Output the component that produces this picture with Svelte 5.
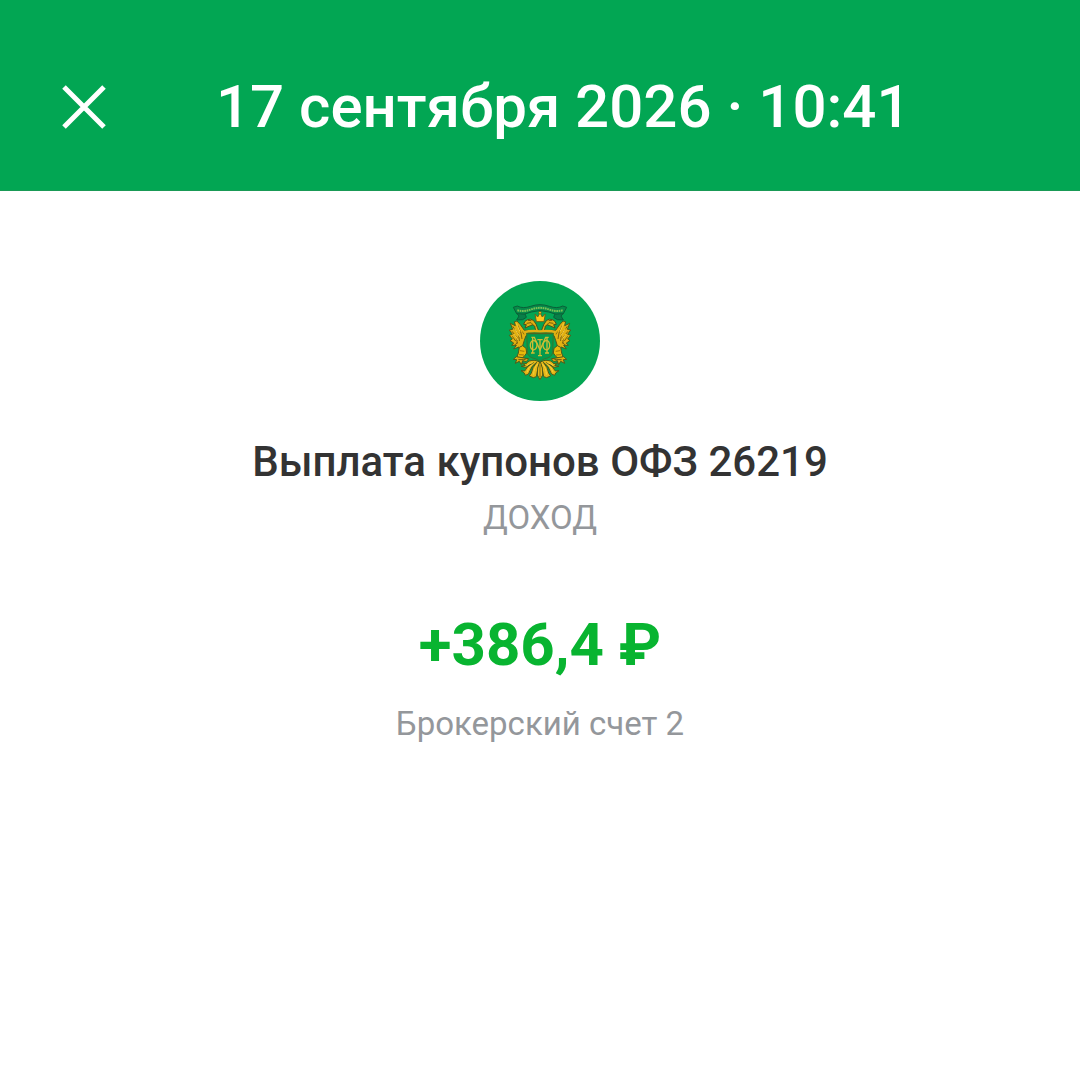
<script>
  const operation = {
    date: '17 сентября 2026 · 10:41',
    title: 'Выплата купонов ОФЗ 26219',
    category: 'ДОХОД',
    amount: '+386,4 ₽',
    account: 'Брокерский счет 2'
  };
</script>

<header class="bar">
  <button class="close" type="button" aria-label="Закрыть">
    <svg viewBox="0 0 48 48" aria-hidden="true">
      <path d="M4 4 44 44M44 4 4 44" />
    </svg>
  </button>
  <h1>{operation.date}</h1>
</header>

<main class="details">
  <svg class="logo" viewBox="30 33 360 360" role="img" aria-label="Минфин России">
    <circle cx="210" cy="213" r="180" fill="#04a553" />

    <!-- ribbon -->
    <g stroke="#0a5f38" stroke-width="3" stroke-linejoin="round">
      <path d="M140 130 147 138 140 150 158 149 169 142 165 131ZM280 130 273 138 280 150 262 149 251 142 255 131Z" fill="#087f48" />
      <path d="M130 112 142 108Q158 117 182 109Q210 99 238 109Q262 117 278 108L290 112 280 131Q257 136 236 126Q210 117 184 126Q163 136 140 131Z" fill="#078a49" />
    </g>
    <path d="M142 121Q164 126 184 118Q210 109 236 118Q256 126 278 121" fill="none" stroke="#7cc255" stroke-width="6" stroke-dasharray="5 2" />

    <!-- wings, mirrored about the centre line -->
    {#each [false, true] as mirrored}
      <g class:mirrored>
        <path d="M192 181 163 181 151 164 141 153 133 155 136 167 121 160 128 178 118 180 127 193 118 196 127 207 120 212 131 219 125 226 139 226 131 237 147 231 148 240 158 227 163 211 168 197 192 194Z" fill="#e3b111" stroke="#4d5a1b" stroke-width="3" />
        <path d="M143 166 153 189 156 207M128 169 146 193 148 213M126 184 141 203 141 221M127 199 137 213M133 226 144 217M158 185 162 193" fill="none" stroke="#795f10" stroke-width="3" />
        <path d="M139 160 150 185M134 176 149 200M132 192 145 211" fill="none" stroke="#f8cf42" stroke-width="3" />
        <path d="M198 186 194 169Q188 161 181 167L165 174 169 164 161 163Q163 153 172 149Q182 145 190 151L198 162 205 180Z" fill="#e1b013" stroke="#49511c" stroke-width="3" />
        <path d="M170 160 183 158 195 170M173 151 184 152" fill="none" stroke="#75600c" stroke-width="3" />
        <path d="M148 232 158 227 168 235 170 249 162 260 150 267 141 260 145 249Z" fill="#e9b90b" stroke="#4d5a1c" stroke-width="3" />
        <path d="M150 242 163 244M147 254 162 255" fill="none" stroke="#997508" stroke-width="3" />
        <path d="M139 260 130 268 140 269 136 280 148 274 154 284 158 272 169 275 176 266 162 264Z" fill="#e1af10" stroke="#4d5a1b" stroke-width="3" />
        <path d="M145 269 161 269 170 266" fill="none" stroke="#655611" stroke-width="3" />
        <path d="M195 271Q175 270 169 281L157 279 166 286 153 289 168 292Q181 283 190 278Q170 288 164 303L153 302 163 309 166 316Q178 315 180 302Q184 288 200 277Q186 293 184 309L178 318 190 323 199 320 204 294 210 276Z" fill="#e6b717" stroke="#4d5a1a" stroke-width="3" />
        <path d="M171 286Q179 279 189 278M171 307Q174 293 187 283M191 314Q191 293 204 281" fill="none" stroke="#f8cf3c" stroke-width="3" />
      </g>
    {/each}

    <!-- centre feathers and crown -->
    <path d="M210 272Q200 295 202 315L210 329 218 315Q220 295 210 272Z" fill="#e8ba1a" stroke="#515a18" stroke-width="3" />
    <path d="M210 284V322" stroke="#836b0d" stroke-width="3" />
    <path d="M195 132 203 141 208 132 206 127 210 123 214 127 212 132 217 141 226 132 222 155H199Z" fill="#ffc61d" stroke="#6b6518" stroke-width="3" />

    <!-- shield with monogram -->
    <path d="M170 187H250L248 249Q244 263 224 266L210 274 196 266Q176 263 172 249Z" fill="#049a4d" stroke="#39742b" stroke-width="3" />
    <path d="M160 187Q183 181 210 184Q239 181 260 187" fill="none" stroke="#e1af14" stroke-width="7" />
    <path d="M172 191H248" stroke="#5e5e1a" stroke-width="3" />
    <g fill="none" stroke="#d0bd32" stroke-width="4">
      <path d="M188 202V249M231 202V249M184 202H193L210 240 227 202H236M183 249H194M225 249H237" />
      <path d="M190 211Q181 214 181 226Q181 239 191 240Q201 236 201 224Q200 213 190 211M230 211Q239 214 239 226Q239 239 229 240Q219 236 219 224Q220 213 230 211" />
      <path d="M210 207V257M202 209H218M204 257H216" />
    </g>
  </svg>

  <h2>{operation.title}</h2>
  <p class="note">{operation.category}</p>
  <p class="amount">{operation.amount}</p>
  <p class="note">{operation.account}</p>
</main>

<style>
  :global(body) {
    margin: 0;
    background: #fff;
    font-family: Roboto, "Noto Sans", sans-serif;
  }

  h1,
  h2,
  p {
    margin: 0;
  }

  .bar {
    display: flex;
    align-items: center;
    gap: 108px;
    padding: 72px 60px 48px;
    background: #02a653;
    border-bottom: 1px solid #199a56;
    color: #fff;
  }

  .close {
    flex: none;
    width: 48px;
    height: 48px;
    padding: 0;
    border: 0;
    background: none;
    color: inherit;
    cursor: pointer;
  }

  .close svg {
    display: block;
    width: 100%;
    height: 100%;
    fill: none;
    stroke: currentColor;
    stroke-width: 5;
  }

  h1 {
    font-size: 60px;
    line-height: 70px;
    font-weight: 500;
  }

  .details {
    display: flex;
    flex-direction: column;
    align-items: center;
    padding: 90px 48px;
    text-align: center;
  }

  .logo {
    width: 120px;
    height: 120px;
  }

  .mirrored {
    transform: translateX(420px) scaleX(-1);
  }

  h2 {
    margin-top: 33px;
    color: #333;
    font-size: 42px;
    line-height: 56px;
    font-weight: 500;
  }

  .note {
    color: #94979b;
    font-size: 33px;
    line-height: 56px;
  }

  .amount {
    margin: 64px 0 16px;
    color: #08b430;
    font-size: 60px;
    line-height: 70px;
    font-weight: 700;
  }
</style>
